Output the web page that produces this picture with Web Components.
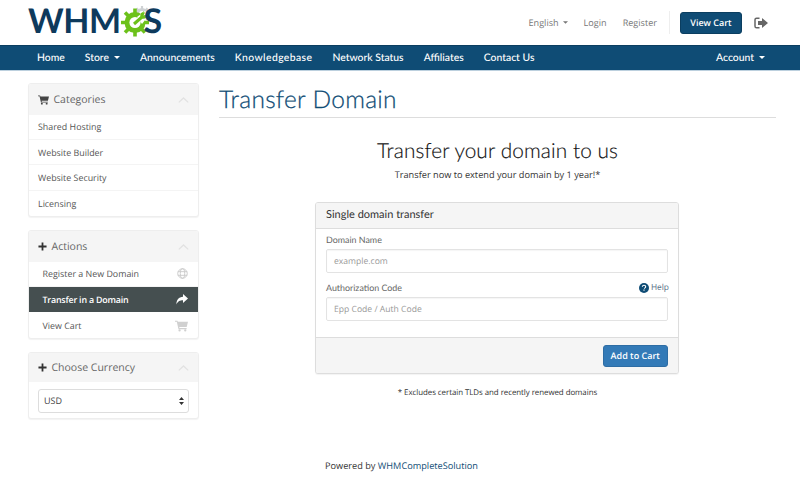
<!DOCTYPE html>
<html lang="en"><head><meta charset="utf-8"><title>Transfer Domain</title>
<style>
html,body{margin:0;padding:0;background:#fff}
body{font-family:"Open Sans","Liberation Sans",sans-serif;font-size:10px;color:#333;width:800px;height:497px;overflow:hidden;text-rendering:geometricPrecision}
site-page{display:block}
</style></head><body>
<site-page></site-page>
<script>
const I={
cart:(s,c)=>`<svg width="${s}" height="${s}" viewBox="0 0 16 16" fill="${c}"><path d="M0 2h3l.5 1.5H16l-1.6 6.4H5.2l.3 1.3h8.8v1.3H4.3L2.2 3.3H0z"/><circle cx="5.6" cy="14" r="1.4"/><circle cx="12.6" cy="14" r="1.4"/></svg>`,
plus:(s,c)=>`<svg width="${s}" height="${s}" viewBox="0 0 10 10" fill="${c}"><path d="M4 .5h2V4h3.5v2H6v3.5H4V6H.5V4H4z"/></svg>`,
chev:`<svg width="11" height="6" viewBox="0 0 11 6" fill="none" stroke="#e2e2e2" stroke-width="1.3"><path d="M.8 5.4 5.5 1l4.7 4.4"/></svg>`,
globe:`<svg width="11" height="11" viewBox="0 0 12 12" fill="none" stroke="#c9c9c9" stroke-width="1"><circle cx="6" cy="6" r="5.2"/><ellipse cx="6" cy="6" rx="2.4" ry="5.2"/><path d="M1 4h10M1 8h10"/></svg>`,
share:`<svg width="12" height="11" viewBox="0 0 12 11" fill="#fff"><path d="M7 0l5 4.5L7 9V6.2C4 6.2 1.8 7 .4 10.5.4 6 2.8 3 7 2.8z"/></svg>`,
caret:c=>`<svg width="6" height="3" viewBox="0 0 6 3" fill="${c}" style="vertical-align:2px"><path d="M0 0h6L3 3z"/></svg>`,
logout:`<svg width="14" height="12" viewBox="0 0 14 12"><path fill="none" stroke="#666" stroke-width="1.5" d="M5.5 1.2H2.6C1.7 1.2 1 1.9 1 2.8v6.4c0 .9.7 1.6 1.6 1.6h2.9"/><path fill="#666" d="M8 1l6 5-6 5V8H4V4h4z"/></svg>`,
help:`<svg width="10" height="10" viewBox="0 0 10 10"><circle cx="5" cy="5" r="5" fill="#0f4c75"/><path d="M3.3 3.8C3.4 2.8 4.1 2.3 5 2.3c1 0 1.7.6 1.7 1.4 0 1.2-1.3 1.1-1.3 2.1" fill="none" stroke="#fff" stroke-width="1.1"/><rect x="4.4" y="6.5" width="1.2" height="1.2" fill="#fff"/></svg>`,
sort:`<svg width="5" height="8" viewBox="0 0 5 8" fill="#333"><path d="M2.5 0 5 3H0zM2.5 8 0 5h5z"/></svg>`,
gear:`<svg width="32" height="32" viewBox="0 0 32 32"><g transform="translate(21 9)"><g stroke="#cfd2d4" stroke-width="2.2"><path d="M0-8V8M-8 0H8M-5.6-5.6 5.6 5.6M5.6-5.6-5.6 5.6"/></g><circle r="6" fill="#cfd2d4"/><circle r="3" fill="#fff"/></g><g transform="translate(14 17.5)"><g stroke="#6cc11a" stroke-width="3.6"><path d="M0-14V14M-14 0H14M-10-10 10 10M10-10-10 10"/></g><circle r="10.5" fill="#6cc11a"/><circle r="5.6" fill="#fff"/></g><path fill="#fff" d="M16 12 24 6l4 4-7 9z"/><path stroke="#6cc11a" stroke-width="3" d="M13 19l8-7"/><circle cx="22.5" cy="10.5" r="3.2" fill="#6cc11a"/><path fill="#fff" d="M22.5 10.5l2-4 2.5 2.5z"/></svg>`
};
function def(name,css,html){
  customElements.define(name,class extends HTMLElement{
    constructor(){super();const r=this.attachShadow({mode:'open'});
      r.innerHTML=`<style>${css}</style>`+(typeof html==='function'?html(this):html);}
  });
}
def('site-logo',`:host{display:flex;align-items:center;height:34px;color:#0e3a5c;font:700 34px/34px Lato,"Liberation Sans",sans-serif;letter-spacing:-.5px}
 .g{display:inline-block;width:31px;height:32px;margin:0 -8px 0 0}`,
 `<span>WHM</span><span class="g">${I.gear}</span><span>S</span>`);
def('top-bar',`:host{display:flex;align-items:center;height:45px;padding:0 32px 0 28px;box-sizing:border-box;font:9.1px "Open Sans",sans-serif;color:#777}
 site-logo{margin-right:auto;margin-top:-3px}
 span.t{margin-right:16px}
 span.t svg{width:5px;margin-left:4px}
 .sep{width:1px;height:23px;background:#eee;margin:0 10px 0 -4px}
 .btn{background:#0f4c75;color:#fff;font-weight:600;font-size:9px;border:1px solid #0b3e60;border-radius:3px;height:22px;width:62px;display:flex;align-items:center;justify-content:center;box-sizing:border-box;margin-right:12px}
 .i{display:flex}`,
 `<site-logo></site-logo><span class="t">English${I.caret('#777')}</span><span class="t">Login</span><span class="t">Register</span><span class="sep"></span><span class="btn">View Cart</span><span class="i">${I.logout}</span>`);
def('main-nav',`:host{display:flex;align-items:center;height:26px;background:#0f4c75;border-top:1px solid #0b3e60;border-bottom:1px solid #bcd0de;box-sizing:border-box;padding:0 35px 1px 37px;color:#fff;font:500 10.4px Lato,"Liberation Sans",sans-serif}
 span{white-space:nowrap}
 span+span{margin-left:20px}
 .r{margin-left:auto!important}
 .k{letter-spacing:.4px}
 svg{margin-left:5px}`,
 `<span>Home</span><span>Store${I.caret('#fff')}</span><span>Announcements</span><span class="k">Knowledgebase</span><span>Network Status</span><span>Affiliates</span><span>Contact Us</span><span class="r">Account${I.caret('#fff')}</span>`);
def('side-panel',`:host{display:block;width:171px;background:#fff;border:1px solid #eee;border-radius:3px;box-sizing:border-box;box-shadow:0 1px 1px rgba(0,0,0,.05);margin-bottom:13px;overflow:hidden}
 .h{display:flex;align-items:center;height:30.5px;background:#f5f5f5;padding:1px 9px 0;font-size:10.5px;color:#666;box-sizing:border-box}
 :host([compact]) .h{height:29px}
 .ic{display:flex;width:15.5px;flex:none}
 :host([icon=plus]) .ic{width:13.5px}
 .c{margin-left:auto;display:flex}`,
 h=>`<div class="h"><span class="ic">${h.getAttribute('icon')==='cart'?I.cart(11,'#444'):I.plus(9,'#333')}</span><span>${h.getAttribute('title')}</span><span class="c">${I.chev}</span></div><slot></slot>`);
def('side-item',`:host{display:flex;align-items:center;height:25.4px;box-sizing:border-box;padding:0 9px;border-bottom:1px solid #f4f4f4;color:#555;font:400 8.9px "Open Sans",sans-serif}
 :host(:last-child){border-bottom:0}
 :host([indent]){padding-left:13.5px}
 :host([active]){background:#454f50;color:#fff;font-weight:600;letter-spacing:-.2px;border-bottom:0}
 .i{margin-left:auto;display:flex;margin-right:1px}`,
 h=>`<slot></slot><span class="i">${({globe:I.globe,share:I.share,cart:I.cart(13,'#d0d0d0')})[h.getAttribute('icon')]||''}</span>`);
def('currency-select',`:host{display:flex;align-items:center;justify-content:space-between;margin:7px 9px 5px;height:24px;border:1px solid #ddd;border-radius:3px;box-sizing:border-box;padding:0 4px 0 5px;font-size:9px;color:#444;background:#fff}
 svg{display:block}`,`<span>USD</span>${I.sort}`);
def('text-field',`:host{display:block;color:#666;font:8.9px Lato,sans-serif}
 .l{display:flex;justify-content:space-between;align-items:center;height:17px;padding-bottom:2px;box-sizing:border-box}
 .b{height:24px;border:1px solid #e3e3e3;border-radius:2px;box-sizing:border-box;display:flex;align-items:center;padding:0 7px;color:#999;box-shadow:inset 0 1px 1px rgba(0,0,0,.04);font:8.6px "Open Sans",sans-serif}
 .help{display:flex;align-items:center;gap:2px;color:#5a7389;font:8.4px "Open Sans",sans-serif;margin-right:-1px}`,
 h=>`<div class="l"><span>${h.getAttribute('label')}</span>${h.hasAttribute('help')?`<span class="help">${I.help}Help</span>`:''}</div><div class="b">${h.getAttribute('placeholder')}</div>`);
def('transfer-card',`:host{display:block;width:364px;margin-left:96px;border:1px solid #ddd;border-radius:3px;box-sizing:border-box;box-shadow:0 1px 1px rgba(0,0,0,.05);background:#fff;overflow:hidden}
 .h{height:26px;background:#f5f5f5;border-bottom:1px solid #ddd;box-sizing:border-box;display:flex;align-items:center;padding:0 10px 2px;font:400 11px Lato,sans-serif;color:#333}
 .b{padding:3px 10px 0;height:108px;box-sizing:border-box;display:grid;grid-template-rows:41px 41px;row-gap:7px;align-content:start}
 .f{height:36px;background:#f5f5f5;border-top:1px solid #ddd;box-sizing:border-box;display:flex;align-items:center;justify-content:flex-end;padding:0 10px}
 .btn{width:65.5px;height:22px;background:#337ab7;border:1px solid #2e6da4;border-radius:3px;color:#fff;font-size:9px;font-weight:600;display:flex;align-items:center;justify-content:center;box-sizing:border-box}`,
 `<div class="h">Single domain transfer</div><div class="b"><text-field label="Domain Name" placeholder="example.com"></text-field><text-field label="Authorization Code" help placeholder="Epp Code / Auth Code"></text-field></div><div class="f"><span class="btn">Add to Cart</span></div>`);
def('site-page',`:host{display:block;font-family:"Open Sans",sans-serif}
 .w{display:flex;padding:12px 24px 0 28px;gap:20px;height:388px;box-sizing:border-box}
 aside{width:171px;flex:none}
 main{flex:1;min-width:0;text-align:center}
 h1{margin:0 0 19px;font:300 24.5px/34px Lato,sans-serif;-webkit-text-stroke:.25px #0f4c75;color:#0f4c75;text-align:left;height:34px;border-bottom:1px solid #ddd;letter-spacing:.3px}
 h2{margin:0 0 3px;font:300 20.8px/28px Lato,sans-serif;-webkit-text-stroke:.15px #111;color:#111;letter-spacing:.1px}
 p{margin:0;font-size:9.2px;line-height:14px;color:#333}
 .s{margin-bottom:20px}
 .n{margin-top:12px;font-size:7.9px;letter-spacing:-.05px}
 .foot{height:40px;text-align:center;font-size:9.2px;color:#333;line-height:14px;padding-left:3px}
 .foot b{font-weight:400;color:#0f4c75}`,
 `<top-bar></top-bar><main-nav></main-nav>
 <div class="w"><aside>
  <side-panel icon="cart" title="Categories"><side-item>Shared Hosting</side-item><side-item>Website Builder</side-item><side-item>Website Security</side-item><side-item>Licensing</side-item></side-panel>
  <side-panel icon="plus" title="Actions"><side-item indent icon="globe">Register a New Domain</side-item><side-item indent active icon="share">Transfer in a Domain</side-item><side-item indent icon="cart">View Cart</side-item></side-panel>
  <side-panel icon="plus" compact title="Choose Currency"><currency-select></currency-select></side-panel>
 </aside><main><h1>Transfer Domain</h1><h2>Transfer your domain to us</h2><p class="s">Transfer now to extend your domain by 1 year!*</p><transfer-card></transfer-card><p class="n">* Excludes certain TLDs and recently renewed domains</p></main></div>
 <div class="foot">Powered by <b>WHMCompleteSolution</b></div>`);
</script></body></html>
